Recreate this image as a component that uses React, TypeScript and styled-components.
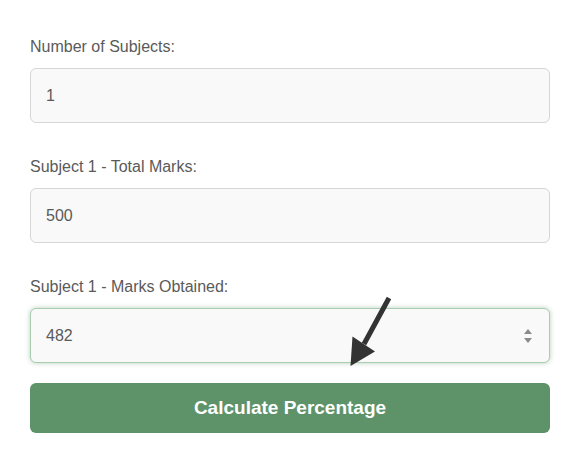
import React from "react";
import styled, { createGlobalStyle } from "styled-components";

const Global = createGlobalStyle`
  html, body { margin: 0; padding: 0; background: #ffffff; }
  body { font-family: "Liberation Sans", Arial, sans-serif; }
`;

const Form = styled.div`
  position: relative;
  width: 520px;
  padding: 38px 0 20px 30px;
  display: flex;
  flex-direction: column;
`;

const Group = styled.div`
  display: flex;
  flex-direction: column;
  gap: 12px;
  margin-bottom: ${(p: { $last?: boolean }) => (p.$last ? "20px" : "35px")};
`;

const Label = styled.label`
  font-size: 16px;
  line-height: 18px;
  color: #5a5a5a;
`;

const Field = styled.div<{ $focused?: boolean }>`
  position: relative;
  box-sizing: border-box;
  height: 55px;
  border-radius: 6px;
  background: #f9f9f9;
  border: 1px solid ${(p) => (p.$focused ? "#a9cdb1" : "#d6d6d6")};
  box-shadow: ${(p) => (p.$focused ? "0 0 5px rgba(95, 147, 106, 0.45)" : "none")};
  display: flex;
  align-items: center;
  padding: 0 15px;
`;

const Value = styled.span`
  font-size: 16px;
  color: #5a5a5a;
  flex: 1;
`;

const Spinner = styled.svg`
  width: 10px;
  height: 16px;
  margin-right: 1px;
`;

const Button = styled.button`
  box-sizing: border-box;
  height: 50px;
  border: none;
  border-radius: 6px;
  background: #5e936a;
  color: #ffffff;
  font-family: "Liberation Sans", Arial, sans-serif;
  font-weight: bold;
  font-size: 19px;
  cursor: pointer;
`;

const Arrow = styled.svg`
  position: absolute;
  left: 340px;
  top: 290px;
  width: 60px;
  height: 85px;
  pointer-events: none;
`;

export default function App() {
  return (
    <>
      <Global />
      <Form>
        <Group>
          <Label>Number of Subjects:</Label>
          <Field>
            <Value>1</Value>
          </Field>
        </Group>
        <Group>
          <Label>Subject 1 - Total Marks:</Label>
          <Field>
            <Value>500</Value>
          </Field>
        </Group>
        <Group $last>
          <Label>Subject 1 - Marks Obtained:</Label>
          <Field $focused>
            <Value>482</Value>
            <Spinner viewBox="0 0 10 16">
              <path d="M1 6 L5 1 L9 6 Z" fill="#8a8a8a" />
              <path d="M1 10 L5 15 L9 10 Z" fill="#8a8a8a" />
            </Spinner>
          </Field>
        </Group>
        <Button>Calculate Percentage</Button>
        <Arrow viewBox="340 290 60 85">
          <line x1="389" y1="298" x2="364" y2="344" stroke="#333333" strokeWidth="5" strokeLinecap="butt" />
          <path d="M352.5 336.5 L375 351.5 L350.5 366 Z" fill="#333333" />
        </Arrow>
      </Form>
    </>
  );
}
